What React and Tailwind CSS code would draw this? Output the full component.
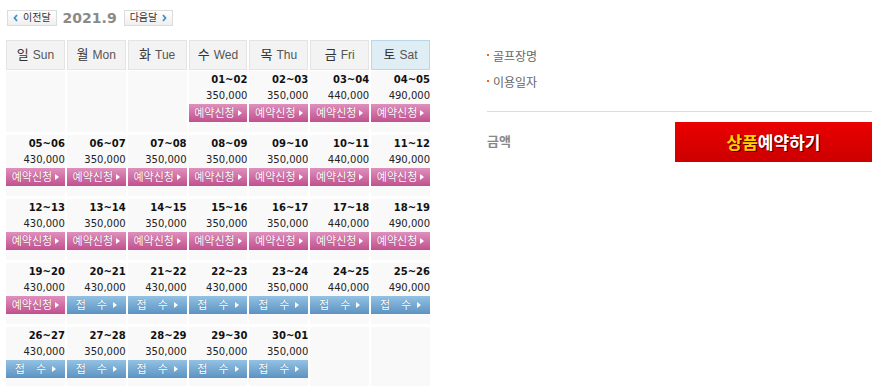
import React from 'react'

const heads = [
  { ko: '일', en: 'Sun' },
  { ko: '월', en: 'Mon' },
  { ko: '화', en: 'Tue' },
  { ko: '수', en: 'Wed' },
  { ko: '목', en: 'Thu' },
  { ko: '금', en: 'Fri' },
  { ko: '토', en: 'Sat', sat: true },
]

// open = 예약신청 (pink), closed = 접수 (blue)
const weeks = [
  [null, null, null,
    { d: '01~02', p: '350,000', open: true },
    { d: '02~03', p: '350,000', open: true },
    { d: '03~04', p: '440,000', open: true },
    { d: '04~05', p: '490,000', open: true }],
  [{ d: '05~06', p: '430,000', open: true },
    { d: '06~07', p: '350,000', open: true },
    { d: '07~08', p: '350,000', open: true },
    { d: '08~09', p: '350,000', open: true },
    { d: '09~10', p: '350,000', open: true },
    { d: '10~11', p: '440,000', open: true },
    { d: '11~12', p: '490,000', open: true }],
  [{ d: '12~13', p: '430,000', open: true },
    { d: '13~14', p: '350,000', open: true },
    { d: '14~15', p: '350,000', open: true },
    { d: '15~16', p: '350,000', open: true },
    { d: '16~17', p: '350,000', open: true },
    { d: '17~18', p: '440,000', open: true },
    { d: '18~19', p: '490,000', open: true }],
  [{ d: '19~20', p: '430,000', open: true },
    { d: '20~21', p: '430,000' },
    { d: '21~22', p: '430,000' },
    { d: '22~23', p: '430,000' },
    { d: '23~24', p: '350,000' },
    { d: '24~25', p: '440,000' },
    { d: '25~26', p: '490,000' }],
  [{ d: '26~27', p: '430,000' },
    { d: '27~28', p: '350,000' },
    { d: '28~29', p: '350,000' },
    { d: '29~30', p: '350,000' },
    { d: '30~01', p: '350,000' },
    null, null],
]

const ko = { fontFamily: '"Liberation Sans", "Noto Sans CJK KR", sans-serif' }
const num = { fontFamily: '"DejaVu Sans", "Noto Sans CJK KR", sans-serif' }

function Arrow() {
  return <span className="inline-block w-0 h-0 border-y-[3.5px] border-y-transparent border-l-[4px] border-l-white" />
}

function DayCell({ day }) {
  if (!day) return <div className="h-[61px] bg-[#f9f9f9]" />
  return (
    <div className="h-[61px] bg-[#f9f9f9] flex flex-col items-end" style={num}>
      <div className="mt-[1px] h-4 leading-4 text-[10px] font-bold text-[#111]">{day.d}</div>
      <div className="h-4 leading-4 text-[10px] text-[#222]">{day.p}</div>
      {day.open ? (
        <button
          className="w-full h-[18px] flex items-center justify-center gap-[3px] bg-gradient-to-b from-[#de90bd] to-[#c0508e] text-white text-[11px] leading-none [text-shadow:0_0_1px_#a03a72]"
          style={ko}
        >
          예약신청<Arrow />
        </button>
      ) : (
        <button
          className="w-full h-[18px] flex items-center justify-center bg-gradient-to-b from-[#93c2e3] to-[#5d93c2] text-white text-[11px] leading-none [text-shadow:0_0_1px_#3e77a8]"
          style={ko}
        >
          <span>접</span>
          <span className="ml-[11px]">수</span>
          <span className="ml-[6px] flex"><Arrow /></span>
        </button>
      )}
    </div>
  )
}

function NavButton({ children }) {
  return (
    <button
      className="h-[16px] px-[5px] flex items-center gap-[5px] border border-[#dcdcdc] bg-gradient-to-b from-white to-[#efefef] text-[10px] text-[#333] leading-none"
      style={ko}
    >
      {children}
    </button>
  )
}

function ChevLeft() {
  return (
    <svg width="5" height="8" viewBox="0 0 5 8">
      <path d="M4 1 L1.5 4 L4 7" stroke="#3f8fd0" strokeWidth="1.8" fill="none" />
    </svg>
  )
}

function ChevRight() {
  return (
    <svg width="5" height="8" viewBox="0 0 5 8">
      <path d="M1 1 L3.5 4 L1 7" stroke="#3f8fd0" strokeWidth="1.8" fill="none" />
    </svg>
  )
}

export default function App() {
  return (
    <div className="w-[879px] h-[386px] bg-white overflow-hidden flex" style={ko}>
      {/* Calendar */}
      <div className="ml-[6px] w-[424px] pt-[9px]">
        <div className="flex items-center h-[17px] ml-[1px]">
          <NavButton><ChevLeft />이전달</NavButton>
          <span className="ml-[6px] text-[14px] font-bold text-[#8a8a8a] leading-none" style={num}>2021.9</span>
          <span className="ml-[7px]"><NavButton>다음달<ChevRight /></NavButton></span>
        </div>

        <div className="mt-[14px] grid grid-cols-7 gap-x-[2px] mb-[1px]">
          {heads.map((h) => (
            <div
              key={h.en}
              className={`h-[30px] flex items-center justify-center gap-[4px] border text-[12px] text-[#555] ${
                h.sat ? 'bg-[#deeef4] border-[#bcd7e4]' : 'bg-[#f3f3f3] border-[#e4e4e4]'
              }`}
            >
              <span className="text-[13px] text-[#333]">{h.ko}</span>
              <span>{h.en}</span>
            </div>
          ))}
        </div>

        <div className="grid grid-cols-7 gap-x-[2px] gap-y-[3px]">
          {weeks.flat().map((day, i) => (
            <DayCell key={i} day={day} />
          ))}
        </div>
      </div>

      {/* Booking panel */}
      <div className="ml-[57px] w-[385px] pt-[49px]">
        <div className="flex items-center h-4 text-[12px] text-[#666]">
          <span className="w-[2px] h-[2px] bg-[#ff6600] mr-[4px] -mt-[4px]" />골프장명
        </div>
        <div className="mt-[10px] flex items-center h-4 text-[12px] text-[#666]">
          <span className="w-[2px] h-[2px] bg-[#ff6600] mr-[4px] -mt-[4px]" />이용일자
        </div>
        <div className="mt-[20px] h-px bg-[#dcdcdc]" />
        <div className="mt-[10px] flex items-center justify-between">
          <span className="text-[13px] font-bold text-[#888]">금액</span>
          <button
            className="w-[197px] h-[40px] flex items-center justify-center bg-gradient-to-b from-[#ea0000] to-[#cc0000] text-[17px] font-bold [text-shadow:1px_1px_0_#5a0000]"
            style={{ fontFamily: '"Noto Sans CJK KR", sans-serif' }}
          >
            <span className="text-[#ffd400]">상품</span>
            <span className="text-white">예약하기</span>
          </button>
        </div>
      </div>
    </div>
  )
}
